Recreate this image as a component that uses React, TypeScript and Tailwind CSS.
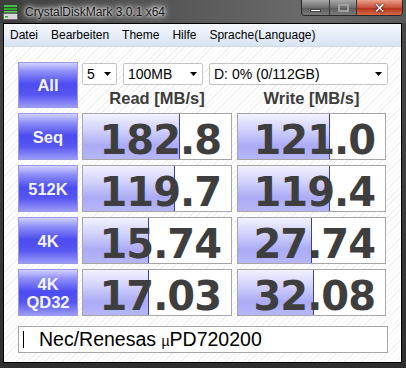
const rows = [
  { label: ['Seq'], read: '182.8', write: '121.0', rw: 97, ww: 92 },
  { label: ['512K'], read: '119.7', write: '119.4', rw: 92, ww: 92 },
  { label: ['4K'], read: '15.74', write: '27.74', rw: 66, ww: 74 },
  { label: ['4K', 'QD32'], read: '17.03', write: '32.08', rw: 66, ww: 76 },
];

const menu = ['Datei', 'Bearbeiten', 'Theme', 'Hilfe', 'Sprache(Language)'];

function AppIcon() {
  return (
    <svg width="15" height="16" viewBox="0 0 15 16">
      <rect x="1" y="1" width="13" height="2" fill="#3fc23f" />
      <rect x="1" y="4" width="13" height="2" fill="#2fa82f" />
      <rect x="1" y="7" width="13" height="1.5" fill="#58d058" />
      <rect x="0.5" y="9.5" width="14" height="6" rx="1" fill="#d8d8d8" stroke="#6a6a6a" />
      <rect x="2" y="12" width="3" height="1.5" fill="#30b030" />
    </svg>
  );
}

function Arrow() {
  return (
    <svg width="7" height="4" viewBox="0 0 7 4" className="shrink-0">
      <path d="M0 0H7L3.5 4Z" fill="#000" />
    </svg>
  );
}

function Select({ w, text }: { w: string; text: string }) {
  return (
    <div
      className={`${w} h-[22px] flex items-center justify-between pl-[4px] pr-[5px] bg-white border border-[#c4c4c4] rounded-[2px] text-[14px] text-black font-['Liberation_Sans',sans-serif]`}
    >
      <span>{text}</span>
      <Arrow />
    </div>
  );
}

function Label({ lines }: { lines: string[] }) {
  return (
    <div className="w-[60px] h-full shrink-0 flex flex-col items-center justify-center border border-[#9a9ae6] bg-[linear-gradient(180deg,#d0d0ff_0%,#8c8cf8_20%,#4c4cf0_48%,#5656f2_72%,#9a9af8_100%)] text-[#f4f4ff] font-bold text-[16.5px] leading-[18px] font-['Liberation_Sans',sans-serif]">
      {lines.map((l) => (
        <span key={l}>{l}</span>
      ))}
    </div>
  );
}

function Result({ w, fill, value }: { w: string; fill: number; value: string }) {
  return (
    <div className={`${w} h-full relative bg-white border border-[#a6a6a6]`}>
      <div
        className="absolute left-0 top-0 bottom-0 border-r border-[#3c3cb4] bg-[linear-gradient(180deg,#f2f2ff_0%,#d2d2fc_35%,#ababf6_70%,#b6b6f8_100%)]"
        style={{ width: fill }}
      />
      <div className="relative pt-[6px] pr-[10px] text-right text-[40px] leading-[40px] tracking-[-1px] font-bold text-[#3e3e3e] font-['DejaVu_Sans',sans-serif]">
        {value}
      </div>
    </div>
  );
}

export default function App() {
  return (
    <div className="w-[406px] h-[368px] flex flex-col bg-[linear-gradient(180deg,#4a4a4a,#2e2e2e)] overflow-hidden">
      {/* title bar */}
      <div className="h-[23px] shrink-0 flex items-start justify-between bg-[linear-gradient(90deg,#3c3c3c_0%,#585858_45%,#6a6a6a_75%,#5a5a5a_100%)]">
        <div className="flex items-center gap-[7px] pl-[3px] pt-[3px]">
          <AppIcon />
          <span className="text-[12px] text-[#141414] font-['Liberation_Sans',sans-serif] [text-shadow:0_0_6px_#fff,0_0_10px_#fff,0_0_3px_#fff]">
            CrystalDiskMark 3.0.1 x64
          </span>
        </div>
        <div className="flex mr-[3px] h-[16px] border border-t-0 border-[#2a2a2a] rounded-b-[4px] overflow-hidden">
          <div className="w-[28px] flex items-end justify-center pb-[3px] bg-[linear-gradient(180deg,#a8a8a8,#707070_50%,#5a5a5a_51%,#7a7a7a)] border-r border-[#3a3a3a]">
            <div className="w-[11px] h-[3px] bg-white border border-[#404040]" />
          </div>
          <div className="w-[27px] flex items-center justify-center bg-[linear-gradient(180deg,#a8a8a8,#707070_50%,#5a5a5a_51%,#7a7a7a)] border-r border-[#3a3a3a]">
            <div className="w-[11px] h-[8px] border-2 border-[#a0a0a0]" />
          </div>
          <div className="w-[45px] flex items-center justify-center bg-[linear-gradient(180deg,#e8a08c,#c8503a_50%,#b02e18_51%,#d86a48)]">
            <span className="text-[14px] leading-[14px] font-bold text-white font-['DejaVu_Sans',sans-serif] [text-shadow:0_0_1px_#000,0_0_2px_#300]">
              ✕
            </span>
          </div>
        </div>
      </div>

      {/* client */}
      <div className="flex-1 ml-[3px] mr-[4px] mb-[5px] border border-black flex flex-col bg-white">
        <div className="h-[23px] shrink-0 flex items-center gap-[13px] pl-[6px] bg-[linear-gradient(180deg,#f6f9fd,#e4ecf7_60%,#dae3f1)] border-b border-[#cfd9e7] text-[12px] text-black font-['Liberation_Sans',sans-serif]">
          {menu.map((m) => (
            <span key={m}>{m}</span>
          ))}
        </div>

        <div className="flex-1 pl-[14px] pt-[15px] flex flex-col bg-[repeating-linear-gradient(135deg,#ffffff_0px,#ffffff_3px,#f1f1f1_3px,#f1f1f1_4px)]">
          <div className="flex gap-[4px] h-[46px]">
            <Label lines={['All']} />
            <div className="flex flex-col">
              <div className="flex mt-[1px] gap-[6px]">
                <Select w="w-[35px]" text="5" />
                <Select w="w-[80px]" text="100MB" />
                <Select w="w-[179px]" text="D: 0% (0/112GB)" />
              </div>
              <div className="flex gap-[5px] mt-[4px] h-[19px] text-[16.5px] leading-[19px] font-bold text-[#3c3c3c] font-['Liberation_Sans',sans-serif]">
                <div className="w-[150px] text-center">Read [MB/s]</div>
                <div className="w-[149px] text-center">Write [MB/s]</div>
              </div>
            </div>
          </div>

          <div className="flex flex-col gap-[5px] mt-[5px]">
            {rows.map((r) => (
              <div key={r.read} className="flex gap-[4px] h-[47px]">
                <Label lines={r.label} />
                <div className="flex gap-[5px]">
                  <Result w="w-[150px]" fill={r.rw} value={r.read} />
                  <Result w="w-[149px]" fill={r.ww} value={r.write} />
                </div>
              </div>
            ))}
          </div>

          <div className="mt-[10px] w-[370px] h-[27px] flex items-center bg-white border border-[#a6a6a6] font-['Liberation_Sans',sans-serif] text-black">
            <div className="ml-[4px] w-[1px] h-[17px] bg-black" />
            <span className="ml-[15px] text-[19.5px] leading-[20px]">
              Nec/Renesas <span className="text-[14px]">µ</span>PD720200
            </span>
          </div>
        </div>
      </div>
    </div>
  );
}
